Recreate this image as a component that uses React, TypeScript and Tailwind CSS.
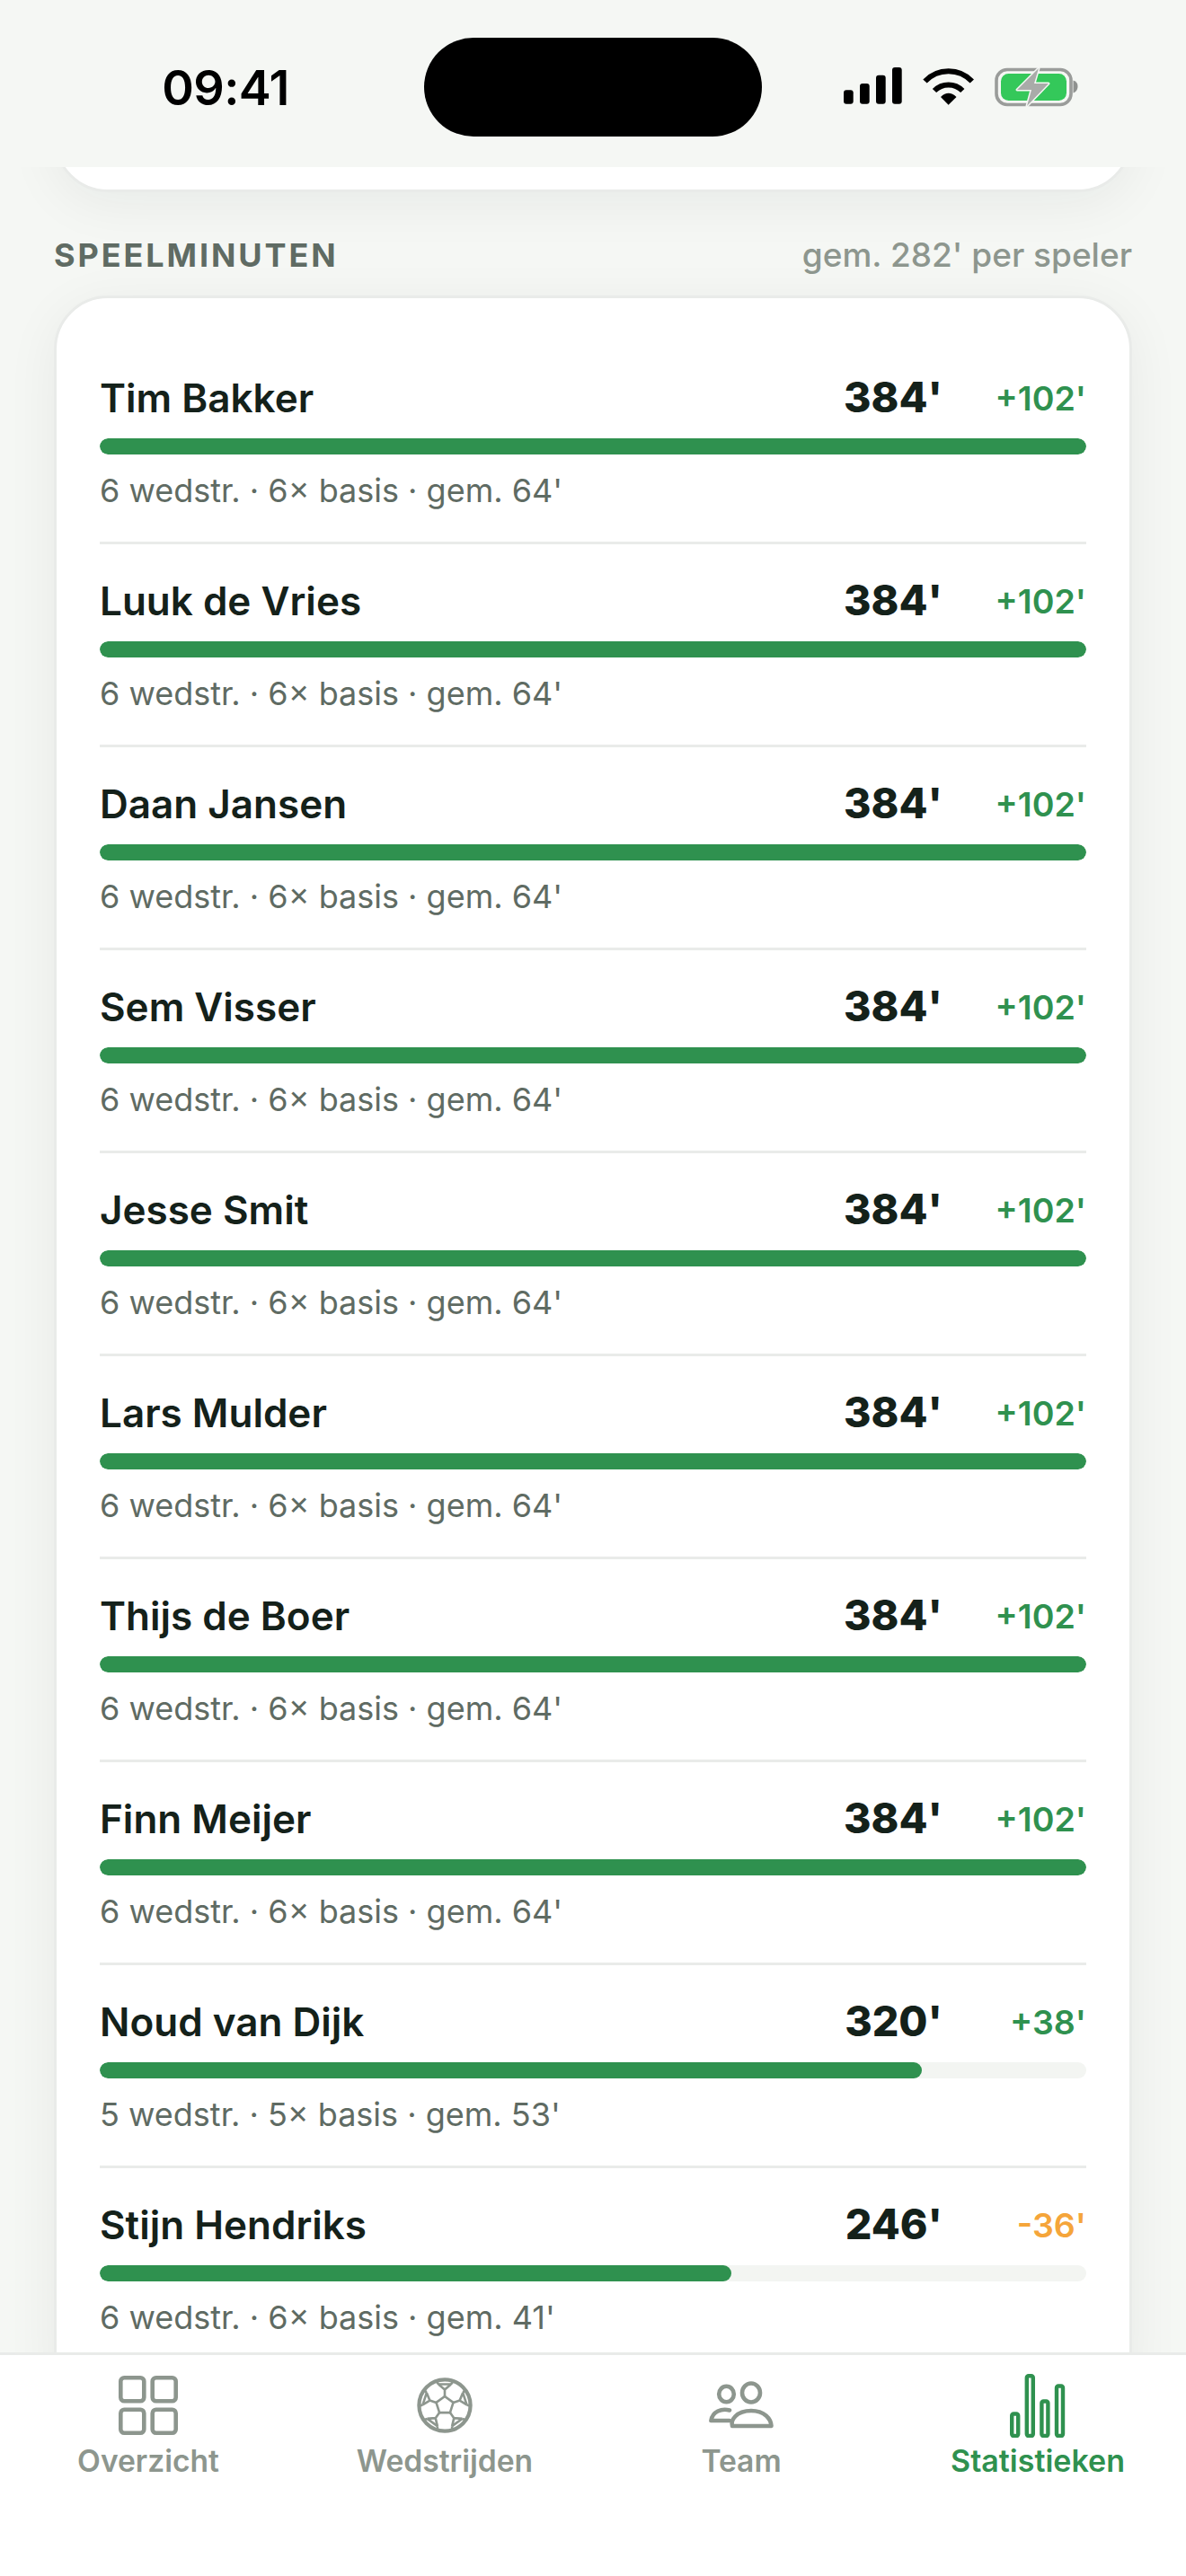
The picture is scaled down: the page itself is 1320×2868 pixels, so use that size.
const PLAYERS = [
  { name: "Tim Bakker", minutes: 384, delta: "+102'", sub: "6 wedstr. · 6× basis · gem. 64'" },
  { name: "Luuk de Vries", minutes: 384, delta: "+102'", sub: "6 wedstr. · 6× basis · gem. 64'" },
  { name: "Daan Jansen", minutes: 384, delta: "+102'", sub: "6 wedstr. · 6× basis · gem. 64'" },
  { name: "Sem Visser", minutes: 384, delta: "+102'", sub: "6 wedstr. · 6× basis · gem. 64'" },
  { name: "Jesse Smit", minutes: 384, delta: "+102'", sub: "6 wedstr. · 6× basis · gem. 64'" },
  { name: "Lars Mulder", minutes: 384, delta: "+102'", sub: "6 wedstr. · 6× basis · gem. 64'" },
  { name: "Thijs de Boer", minutes: 384, delta: "+102'", sub: "6 wedstr. · 6× basis · gem. 64'" },
  { name: "Finn Meijer", minutes: 384, delta: "+102'", sub: "6 wedstr. · 6× basis · gem. 64'" },
  { name: "Noud van Dijk", minutes: 320, delta: "+38'", sub: "5 wedstr. · 5× basis · gem. 53'" },
  { name: "Stijn Hendriks", minutes: 246, delta: "-36'", sub: "6 wedstr. · 6× basis · gem. 41'" },
];

function SignalIcon() {
  return (
    <svg width="65" height="41" viewBox="0 0 65 41" fill="#000">
      <rect x="0" y="25.3" width="10.7" height="15.4" rx="3" />
      <rect x="18" y="18" width="10.7" height="22.7" rx="3" />
      <rect x="36" y="8.7" width="10.7" height="32" rx="3" />
      <rect x="54" y="0" width="10.7" height="40.7" rx="3" />
    </svg>
  );
}

function WifiIcon() {
  return (
    <svg width="58" height="41" viewBox="0 0 58 41" fill="none" stroke="#000" strokeWidth="6">
      <path d="M2.5 14.5A36 36 0 0 1 54.8 14.5" />
      <path d="M13 25A22 22 0 0 1 44.3 25" />
      <path d="M28.6 40.7L20 32Q28.6 23.6 37.5 32Z" fill="#000" stroke="none" />
    </svg>
  );
}

function BatteryIcon() {
  return (
    <svg width="93" height="46" viewBox="0 0 93 46" fill="none">
      <rect x="2" y="3.5" width="83" height="39" rx="12" stroke="#9a9c9a" strokeWidth="3.6" />
      <rect x="7" y="8" width="73" height="30" rx="8.5" fill="#34c85a" />
      <path d="M87.5 15.5C91 16.5 92.5 19 92.5 22S91 28.5 87.5 29.5Z" fill="#8f918f" />
      <path
        d="M49 2L25 26H41L36 44L60 19H44Z"
        fill="#a9aba9"
        stroke="#f5f7f4"
        strokeWidth="3"
        strokeLinejoin="round"
        paintOrder="stroke"
      />
    </svg>
  );
}

function GridIcon() {
  return (
    <svg width="66" height="66" viewBox="0 0 66 66" fill="none" stroke="#8d968e" strokeWidth="4.6">
      <rect x="2.3" y="2.3" width="26" height="26" rx="4" />
      <rect x="37.7" y="2.3" width="26" height="26" rx="4" />
      <rect x="2.3" y="37.7" width="26" height="26" rx="4" />
      <rect x="37.7" y="37.7" width="26" height="26" rx="4" />
    </svg>
  );
}

function BallIcon() {
  return (
    <svg width="62" height="62" viewBox="-31 -31 62 62" fill="none" stroke="#8d968e" strokeWidth="2.6" strokeLinejoin="round">
      <circle cx="0" cy="0" r="28.6" strokeWidth="4.2" />
      <path d="M0 -10L9.5 -3.1L5.9 8.1L-5.9 8.1L-9.5 -3.1Z" />
      {[0, 72, 144, 216, 288].map((deg) => (
        <g key={deg} transform={`rotate(${deg})`}>
          <path d="M0 -10L0 -17.5L-7 -23.5M0 -17.5L7 -23.5" />
          <path d="M-7 -23.5L7 -23.5M-7 -23.5L-9.5 -27M7 -23.5L9.5 -27" />
        </g>
      ))}
    </svg>
  );
}

function TeamIcon() {
  return (
    <svg width="72" height="54" viewBox="0 0 72 54" fill="none" stroke="#8d968e" strokeWidth="4.6" strokeLinecap="round" strokeLinejoin="round">
      <ellipse cx="19.5" cy="14.5" rx="8.3" ry="8.7" />
      <ellipse cx="47" cy="13" rx="10" ry="10.5" />
      <path d="M23 32.5C14 30 4 34 2.4 44H23" />
      <path d="M26 50C24 44 30 33 47 33C62 33 69 42 69.5 50Z" />
    </svg>
  );
}

function StatsIcon() {
  return (
    <svg width="62" height="71" viewBox="0 0 62 71" fill="none" stroke="#2f914f" strokeWidth="4.4">
      <rect x="2.2" y="44.5" width="7" height="24.5" rx="2" />
      <rect x="18.8" y="2.2" width="7" height="66.8" rx="2" />
      <rect x="35.4" y="30.5" width="7" height="38.5" rx="2" />
      <rect x="52" y="13.5" width="7" height="55.5" rx="2" />
    </svg>
  );
}

function Tab({ label, active, icon }: { label: string; active?: boolean; icon: React.ReactNode }) {
  return (
    <div className="flex flex-col items-center">
      <div className="flex h-[72px] items-center justify-center">{icon}</div>
      <span className={`mt-[5px] leading-[42px] font-semibold ${active ? "text-[34px] text-[#2f914f]" : "text-[33.6px] text-[#8d968e]"}`}>
        {label}
      </span>
    </div>
  );
}

function PlayerRow({ player, last }: { player: (typeof PLAYERS)[number]; last: boolean }) {
  const negative = player.delta.startsWith("-");
  return (
    <div className={`pt-[36px] pb-[33px] ${last ? "" : "border-b-[3px] border-[#e9ebe9]"}`}>
      <div className="flex h-[54px] items-center">
        <span className="flex-1 text-[44px] font-semibold text-[#14211a]">{player.name}</span>
        <span className="text-[46.5px] font-extrabold text-[#14211a]">{player.minutes}'</span>
        <span className={`mt-[2px] w-[160px] text-right text-[37.5px] font-semibold ${negative ? "text-[#f5a53a]" : "text-[#2f914f]"}`}>
          {player.delta}
        </span>
      </div>
      <div className="mt-[18px] h-[18px] overflow-hidden rounded-full bg-[#f3f5f2]">
        <div className="h-full rounded-full bg-[#2f914f]" style={{ width: `${(player.minutes / 384) * 100}%` }} />
      </div>
      <div className="mt-[16px] text-[36px] leading-[48px] text-[#5f6b63]">{player.sub}</div>
    </div>
  );
}

export default function App() {
  return (
    <div className="flex h-[2868px] w-[1320px] flex-col overflow-hidden bg-[#f5f7f4] font-['Inter',sans-serif]">
      {/* Status bar */}
      <header className="relative z-10 flex h-[186px] shrink-0 bg-[#f5f7f4]">
        <div className="flex w-[472px] justify-center pl-[30px] pt-[65px]">
          <span className="text-[54px] leading-[66px] font-semibold tracking-[-0.6px] text-black">09:41</span>
        </div>
        <div className="mt-[42px] h-[110px] w-[376px] rounded-full bg-black" />
        <div className="ml-[91px] mt-[75px] flex h-[46px] items-start">
          <SignalIcon />
          <div className="ml-[23px] mt-[1px]">
            <WifiIcon />
          </div>
          <div className="ml-[22px] -mt-[1px]">
            <BatteryIcon />
          </div>
        </div>
      </header>

      <main className="min-h-0 flex-1 overflow-hidden px-[60px]">
        {/* Bottom of the card above */}
        <div className="-mt-[175px] h-[203px] rounded-[60px] border-[3px] border-[#e9ebe9] bg-white shadow-[0_12px_60px_rgba(20,33,26,0.06)]" />

        <div className="mt-[46px] flex h-[48px] items-center justify-between">
          <span className="text-[36px] font-bold tracking-[2.9px] text-[#5f6b63]">SPEELMINUTEN</span>
          <span className="text-[37px] font-medium text-[#8d968e]">gem. 282' per speler</span>
        </div>

        <div className="mt-[21px] rounded-[60px] border-[3px] border-[#e9ebe9] bg-white px-[48px] pt-[48px] pb-[48px] shadow-[0_12px_60px_rgba(20,33,26,0.06)]">
          {PLAYERS.map((player, i) => (
            <PlayerRow key={player.name} player={player} last={i === PLAYERS.length - 1} />
          ))}
        </div>
      </main>

      {/* Tab bar */}
      <nav className="relative z-10 grid h-[249px] shrink-0 grid-cols-4 border-t-[3px] border-[#e9ebe9] bg-white pt-[20px]">
        <Tab label="Overzicht" icon={<GridIcon />} />
        <Tab label="Wedstrijden" icon={<BallIcon />} />
        <Tab label="Team" icon={<TeamIcon />} />
        <Tab label="Statistieken" active icon={<StatsIcon />} />
      </nav>
    </div>
  );
}
